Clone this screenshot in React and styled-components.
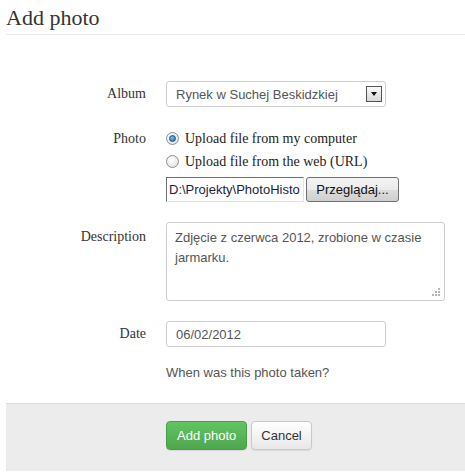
import styled, { createGlobalStyle } from "styled-components";

const GlobalStyle = createGlobalStyle`
  body {
    margin: 0;
    background: #fff;
    font-family: "Liberation Serif", serif;
    color: #333;
  }
`;

const Page = styled.div`
  width: 465px;
  padding-left: 6px;
  box-sizing: border-box;
`;

const Title = styled.h1`
  margin: 0;
  padding-top: 5px;
  height: 29px;
  font-family: "Liberation Serif", serif;
  font-weight: normal;
  font-size: 22px;
  line-height: 26px;
  color: #333;
  border-bottom: 1px solid #eaeaea;
`;

const Form = styled.form`
  display: grid;
  grid-template-columns: 140px 279px;
  column-gap: 20px;
  row-gap: 20px;
  padding-top: 46px;
  padding-bottom: 23px;
`;

const Label = styled.div`
  text-align: right;
  font-size: 14px;
  line-height: 18px;
  padding-top: ${(p) => p.$top || 4}px;
  color: #333;
`;

const Field = styled.div`
  display: flex;
  flex-direction: column;
  align-items: flex-start;
`;

const Select = styled.div`
  width: 220px;
  height: 26px;
  box-sizing: border-box;
  border: 1px solid #ccc;
  border-radius: 3px;
  display: flex;
  align-items: center;
  justify-content: space-between;
  padding: 0 3px 0 9px;
  font-family: "Liberation Sans", sans-serif;
  font-size: 13px;
  color: #555;
`;

const Arrow = styled.span`
  width: 16px;
  height: 16px;
  box-sizing: border-box;
  border: 1px solid #555;
  background: linear-gradient(#fafafa, #d8d8d8);
  display: flex;
  align-items: center;
  justify-content: center;

  &::after {
    content: "";
    border-left: 3px solid transparent;
    border-right: 3px solid transparent;
    border-top: 4px solid #111;
  }
`;

const RadioRow = styled.label`
  display: flex;
  align-items: center;
  gap: 6px;
  height: 23px;
  font-size: 14px;
  color: #222;
`;

const RadioDot = styled.span`
  width: 13px;
  height: 13px;
  box-sizing: border-box;
  border-radius: 50%;
  border: 1px solid #8e8f8f;
  background: radial-gradient(circle at 40% 35%, #fff, #dcdcdc);
  display: flex;
  align-items: center;
  justify-content: center;

  &::after {
    content: "";
    display: ${(p) => (p.$checked ? "block" : "none")};
    width: 5px;
    height: 5px;
    border-radius: 50%;
    background: radial-gradient(circle at 40% 35%, #7ec3f2, #1b5fa6);
    border: 1px solid #1d4f86;
  }
`;

const FileRow = styled.div`
  display: flex;
  gap: 2px;
  margin-top: 4px;
  height: 25px;
`;

const FileText = styled.div`
  width: 138px;
  box-sizing: border-box;
  border: 1px solid #a0a0a0;
  border-top-color: #707070;
  border-left-color: #707070;
  border-right-color: #e3e3e3;
  border-bottom-color: #e3e3e3;
  padding: 0 2px;
  display: flex;
  align-items: center;
  overflow: hidden;
  white-space: nowrap;
  font-family: "Liberation Sans", sans-serif;
  font-size: 13px;
  color: #1c1c44;
`;

const Browse = styled.button`
  width: 93px;
  box-sizing: border-box;
  border: 1px solid #707070;
  border-radius: 3px;
  background: linear-gradient(#f4f4f4 0%, #ebebeb 50%, #dddddd 51%, #cfcfcf 100%);
  font-family: "Liberation Sans", sans-serif;
  font-size: 13px;
  color: #111;
  padding: 0;
`;

const TextArea = styled.div`
  position: relative;
  width: 279px;
  height: 79px;
  box-sizing: border-box;
  border: 1px solid #ccc;
  border-radius: 3px;
  padding: 5px 8px;
  font-family: "Liberation Sans", sans-serif;
  font-size: 13px;
  line-height: 20px;
  color: #555;
`;

const Grip = styled.svg`
  position: absolute;
  right: 3px;
  bottom: 3px;
`;

const Input = styled.div`
  width: 220px;
  height: 26px;
  box-sizing: border-box;
  border: 1px solid #ccc;
  border-radius: 3px;
  padding: 0 9px;
  display: flex;
  align-items: center;
  font-family: "Liberation Sans", sans-serif;
  font-size: 13px;
  color: #555;
`;

const Help = styled.div`
  grid-column: 2;
  margin-top: -2px;
  font-family: "Liberation Sans", sans-serif;
  font-size: 13px;
  color: #555;
`;

const Footer = styled.div`
  background: #ececec;
  border-top: 1px solid #dcdcdc;
  height: 68px;
  box-sizing: border-box;
  display: flex;
  align-items: flex-start;
  gap: 4px;
  padding: 17px 0 0 160px;
`;

const Button = styled.button`
  height: 29px;
  box-sizing: border-box;
  padding: 0 ${(p) => (p.$primary ? 10 : 9)}px;
  border-radius: 4px;
  font-family: "Liberation Sans", sans-serif;
  font-size: 13px;
  border: 1px solid ${(p) => (p.$primary ? "#4a9c4a" : "#c8c8c8")};
  color: ${(p) => (p.$primary ? "#fff" : "#333")};
  background: ${(p) =>
    p.$primary
      ? "linear-gradient(#62c462, #4fa64f)"
      : "linear-gradient(#ffffff, #e8e8e8)"};
  box-shadow: 0 1px 1px rgba(0, 0, 0, 0.08);
`;

export default function App() {
  return (
    <Page>
      <GlobalStyle />
      <Title>Add photo</Title>
      <Form>
        <Label $top={4}>Album</Label>
        <Field>
          <Select>
            Rynek w Suchej Beskidzkiej
            <Arrow />
          </Select>
        </Field>

        <Label $top={3}>Photo</Label>
        <Field>
          <RadioRow>
            <RadioDot $checked />
            Upload file from my computer
          </RadioRow>
          <RadioRow>
            <RadioDot />
            Upload file from the web (URL)
          </RadioRow>
          <FileRow>
            <FileText>D:\Projekty\PhotoHisto</FileText>
            <Browse type="button">Przeglądaj...</Browse>
          </FileRow>
        </Field>

        <Label $top={6}>Description</Label>
        <Field>
          <TextArea>
            Zdjęcie z czerwca 2012, zrobione w czasie jarmarku.
            <Grip width="9" height="9" viewBox="0 0 9 9">
              <g fill="#b5b5b5">
                <rect x="6" y="0" width="2" height="2" />
                <rect x="3" y="3" width="2" height="2" />
                <rect x="6" y="3" width="2" height="2" />
                <rect x="0" y="6" width="2" height="2" />
                <rect x="3" y="6" width="2" height="2" />
                <rect x="6" y="6" width="2" height="2" />
              </g>
            </Grip>
          </TextArea>
        </Field>

        <Label $top={4}>Date</Label>
        <Field>
          <Input>06/02/2012</Input>
        </Field>
        <Help>When was this photo taken?</Help>
      </Form>
      <Footer>
        <Button $primary type="button">Add photo</Button>
        <Button type="button">Cancel</Button>
      </Footer>
    </Page>
  );
}
